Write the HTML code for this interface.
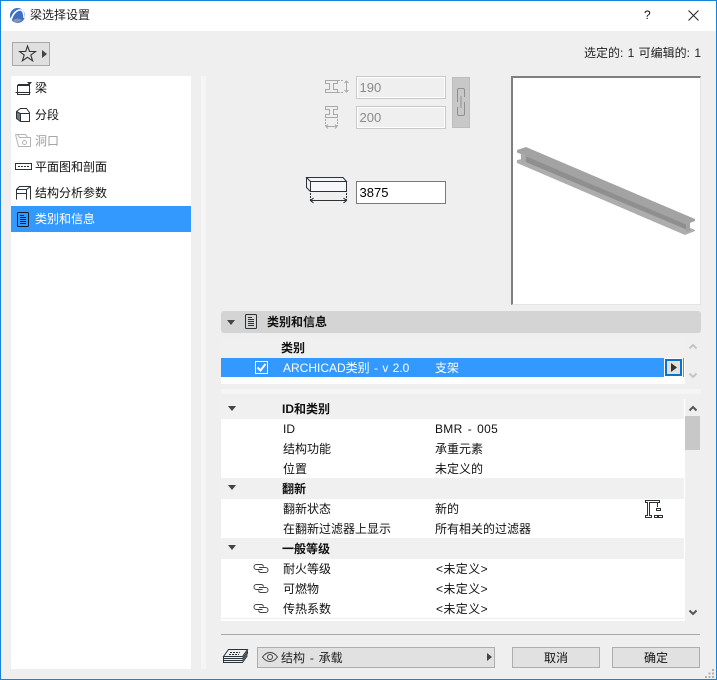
<!DOCTYPE html>
<html lang="zh"><head><meta charset="utf-8"><title>梁选择设置</title>
<style>
html,body{margin:0;padding:0;width:717px;height:680px;overflow:hidden;background:#efefef}
body{position:relative;font:12px/20px "Liberation Sans","Noto Sans CJK SC",sans-serif;color:#111}
.a{position:absolute}
.t{position:absolute;white-space:nowrap}
.b{font-weight:bold}
svg{position:absolute;overflow:visible}
.inp{position:absolute;box-sizing:border-box;left:356px;width:90px;height:23px;line-height:21px;padding-left:2.5px;font-size:13px}
.btn{position:absolute;box-sizing:border-box;top:647px;height:21px;width:88px;background:#e1e1e1;border:1px solid #adadad;text-align:center;line-height:21px}
.r{position:absolute;left:221px;width:463px;height:19px;background:#fff}
.g{position:absolute;left:221px;width:463px;height:21px;background:#f0f0f0}
</style></head><body>
<div class="a" style="left:0;top:0;width:717px;height:31px;background:#fff"></div>
<svg style="left:9px;top:7px" width="17" height="17" viewBox="0 0 17 17"><circle cx="8.5" cy="8.5" r="7.5" fill="#3d6fc4"/><path d="M2 13C4 6 8 3 11 3c3 0 4 4 4 8" fill="none" stroke="#fff" stroke-width="1.6"/><path d="M3 14c3-3 7-3 10-1-3 3-7 3-10 1z" fill="#8a93a8"/></svg>
<div class="t" style="left:30px;top:5px;font-size:12px;color:#222">梁选择设置</div>
<div class="t" style="left:644px;top:5px;font-size:12px;color:#111">?</div>
<svg style="left:688px;top:10px" width="11" height="11"><path d="M.5.5l10 10M10.500.5l-10 10" stroke="#222" fill="none"/></svg>

<div class="a" style="left:12px;top:42px;width:38px;height:24px;box-sizing:border-box;background:#dfdfdf;border:1px solid #a9a9a9"></div>
<svg style="left:19px;top:45px" width="18" height="17" viewBox="0 0 18 17"><path d="M8.5 1l2 5.500h6l-4.700 3.600 1.800 5.700-5.100-3.500-5.100 3.500 1.800-5.700L.7 6.500h6z" fill="none" stroke="#333" stroke-width="1.100"/></svg>
<svg style="left:42px;top:50px" width="5" height="8"><path d="M0 0l5 4-5 4z" fill="#444"/></svg>
<div class="t" style="right:16px;top:43px;color:#222;word-spacing:1px">选定的: 1 可编辑的: 1</div>

<div class="a" style="left:11px;top:76px;width:180px;height:593px;background:#fff"></div>
<div class="a" style="left:201px;top:76px;width:5px;height:593px;background:#f5f5f5"></div>
<div class="a" style="left:11px;top:206px;width:180px;height:26px;background:#3399ff"></div>

<svg style="left:15px;top:82px" width="18" height="14" fill="none" stroke="#2c3338"><path d="M2.5 3.500h12v9h-12zM.5 10.500h15M2.500 3.500l1-1h11M14.500 2.500v2"/><path d="M12 0h5l-2.500 3z" fill="#2c3338" stroke="none"/></svg>
<div class="t" style="left:35px;top:78px">梁</div>
<svg style="left:16px;top:108px" width="15" height="14" fill="none" stroke="#2c3338"><path d="M1 4l3.500 2v7L1 10.500z" fill="#777" stroke="none"/><path d="M.5 3.500L4.500.5h6l3 4v9h-9l-4-3zM4.500 13.500v-8l-4-2M4.500 5.500h9"/></svg>
<div class="t" style="left:35px;top:105px">分段</div>
<svg style="left:15px;top:134px" width="17" height="14" fill="none" stroke="#b5b5b5"><path d="M.5.500h10l2 3h-8l-2-3zM.5.500l3 12h12V3.500H4.500"/><circle cx="9.500" cy="8.500" r="2"/></svg>
<div class="t" style="left:35px;top:131px;color:#9c9c9c">洞口</div>
<svg style="left:15px;top:163px" width="17" height="8" fill="none" stroke="#2c3338"><path d="M.5.500h16v6H.5z"/><path d="M3 3.500h11" stroke-dasharray="2 1"/></svg>
<div class="t" style="left:35px;top:157px">平面图和剖面</div>
<svg style="left:16px;top:186px" width="15" height="14" fill="none" stroke="#2c3338"><path d="M.5 13.500v-10l3-3h11v13M.5 3.500h10v10M.5 7.500h10M10.500 3.500l4-3"/></svg>
<div class="t" style="left:35px;top:183px">结构分析参数</div>
<svg style="left:17px;top:212px" width="12" height="15" fill="none" stroke="#14202c"><rect x=".5" y=".5" width="11" height="14" rx="1"/><path d="M3 3.500h4M3 5.500h6M3 7.500h6M3 9.500h6M3 11.500h6"/></svg>
<div class="t" style="left:35px;top:209px;color:#fff">类别和信息</div>

<svg style="left:325px;top:80px" width="25" height="14" fill="none" stroke="#a8a8a8"><path d="M.5.500h12v3h-4v6h4v3H.5v-3h4v-6h-4z"/><path d="M13 .5h5M13 12.500h5" stroke-dasharray="2 1"/><path d="M21.500 1v11M19.500 3l2-2 2 2M19.500 10l2 2 2-2"/></svg>
<svg style="left:325px;top:106px" width="14" height="23" fill="none" stroke="#a8a8a8"><path d="M.5.500h12v3h-4v5h4v3H.5v-3h4v-5h-4z"/><path d="M.5 13v7M12.500 13v7" stroke-dasharray="2 1"/><path d="M1 20.500h11M3 18.500l-2 2 2 2M10 18.500l2 2-2 2"/></svg>
<div class="inp" style="top:76px;background:#efefef;border:1px solid #c9c9c9;box-shadow:inset 0 0 0 1px #fff;color:#8a8a8a">190</div>
<div class="inp" style="top:106px;background:#efefef;border:1px solid #c9c9c9;box-shadow:inset 0 0 0 1px #fff;color:#8a8a8a">200</div>
<div class="a" style="left:452px;top:77px;width:18px;height:51px;box-sizing:border-box;background:#c8c8c8;border:1px solid #bdbdbd"></div>
<svg style="left:457px;top:88px" width="8" height="28" fill="none" stroke="#8f8f8f"><path d="M.5 14V2Q.5.5 2 .5h4Q7.500.5 7.500 2v7M7.500 14v12Q7.500 27.500 6 27.500H2Q.5 27.500.5 26v-7M4 8v12"/></svg>
<svg style="left:306px;top:177px" width="42" height="27" fill="none" stroke="#2c3338"><path d="M.5.500H37l3.500 4H4.500z" fill="#f3f3f3"/><path d="M4.500 4.500h36v10h-36z" fill="#f7f7f9"/><path d="M.5.500v10l4 4"/><path d="M4.500 16v7M40.500 16v7" stroke-dasharray="2 1"/><path d="M5 23.500h35M7.500 21l-3 2.500 3 2.500M37.500 21l3 2.500-3 2.500" stroke-width="1.100"/></svg>
<div class="inp" style="top:181px;background:#fff;border:1px solid #7a7a7a;color:#000">3875</div>

<div class="a" style="left:511px;top:76px;width:190px;height:229px;box-sizing:border-box;background:#fff;border:1px solid #e3e3e3;border-top:2px solid #7f7f7f;border-left:2px solid #7f7f7f"></div>
<svg style="left:0;top:0" width="717" height="680" viewBox="0 0 717 680">
<path d="M517 160L522 159 695 230V231L685 235 517 163z" fill="#adadad"/>
<path d="M521 152L690 224V231L521 160z" fill="#8f8f8f"/>
<path d="M517 150L526 147 695 219V221L686 224.500 517 152.500z" fill="#a3a3a3"/>
<path d="M521 153l5 2v7l-5-2z" fill="#a9a9a9"/>
<path d="M686 224l4-1.500v8.500l-4 1z" fill="#a3a3a3"/>
</svg>

<div class="a" style="left:221px;top:311px;width:480px;height:22px;background:#d4d4d4;border-radius:3px"></div>
<svg style="left:227px;top:320px" width="8" height="5"><path d="M0 0h8L4 5z" fill="#444"/></svg>
<svg style="left:245px;top:314px" width="12" height="15" fill="none" stroke="#2c3338"><rect x=".5" y=".5" width="11" height="14" rx="1"/><path d="M3 3.500h4M3 5.500h6M3 7.500h6M3 9.500h6M3 11.500h6"/></svg>
<div class="t b" style="left:267px;top:312px">类别和信息</div>

<div class="a" style="left:221px;top:338px;width:464px;height:20px;background:#f0f0f0"></div>
<div class="t b" style="left:281px;top:338px">类别</div>
<div class="a" style="left:221px;top:358px;width:443px;height:19px;background:#3399ff"></div>
<div class="a" style="left:221px;top:377px;width:464px;height:7px;background:#fff"></div>
<div class="a" style="left:664px;top:358px;width:21px;height:19px;background:#fff"></div>
<div class="a" style="left:683px;top:358px;width:1px;height:19px;background:#3399ff"></div>
<div class="a" style="left:665px;top:359px;width:17px;height:17px;box-sizing:border-box;border:2px solid #0c72c8;background:#e1e1e1"></div>
<svg style="left:671px;top:363px" width="6" height="9"><path d="M0 0l6 4.500L0 9z" fill="#333"/></svg>
<svg style="left:255px;top:361px" width="13" height="13"><rect x=".5" y=".5" width="12" height="12" fill="#3399ff" stroke="#fff"/><path d="M2.500 6.500l3 3L10.500 3" fill="none" stroke="#fff" stroke-width="2"/></svg>
<div class="t" style="left:283px;top:358px;color:#fff;word-spacing:1px">ARCHICAD类别 - v 2.0</div>
<div class="t" style="left:435px;top:358px;color:#fff">支架</div>
<svg style="left:689px;top:344px" width="8" height="5" fill="none" stroke="#c4c4c4" stroke-width="2"><path d="M.5 4.500l3.500-3.500 3.500 3.500"/></svg>
<svg style="left:689px;top:373px" width="8" height="5" fill="none" stroke="#c4c4c4" stroke-width="2"><path d="M.5.500L4 4 7.500.5"/></svg>

<div class="a" style="left:221px;top:389px;width:480px;height:5px;background:#f5f5f5"></div>

<div class="a" style="left:221px;top:399px;width:464px;height:222px;background:#fff"></div>
<div class="g" style="top:399px;height:20px"></div>
<div class="r" style="top:419px"></div>
<div class="r" style="top:439px"></div>
<div class="r" style="top:459px"></div>
<div class="g" style="top:478px"></div>
<div class="r" style="top:499px"></div>
<div class="r" style="top:519px"></div>
<div class="g" style="top:538px"></div>
<div class="r" style="top:559px"></div>
<div class="r" style="top:579px"></div>
<div class="r" style="top:599px"></div>
<div class="a" style="left:221px;top:618px;width:463px;height:1px;background:#efefef"></div>

<svg style="left:228px;top:406px" width="8" height="5"><path d="M0 0h8L4 5z" fill="#444"/></svg>
<svg style="left:228px;top:485px" width="8" height="5"><path d="M0 0h8L4 5z" fill="#444"/></svg>
<svg style="left:228px;top:545px" width="8" height="5"><path d="M0 0h8L4 5z" fill="#444"/></svg>

<div class="t b" style="left:282px;top:399px">ID和类别</div>
<div class="t" style="left:283px;top:419px">ID</div><div class="t" style="left:435px;top:419px;letter-spacing:.3px;word-spacing:1.500px">BMR - 005</div>
<div class="t" style="left:283px;top:439px">结构功能</div><div class="t" style="left:435px;top:439px">承重元素</div>
<div class="t" style="left:283px;top:459px">位置</div><div class="t" style="left:435px;top:459px">未定义的</div>
<div class="t b" style="left:282px;top:479px">翻新</div>
<div class="t" style="left:283px;top:499px">翻新状态</div><div class="t" style="left:435px;top:499px">新的</div>
<div class="t" style="left:283px;top:519px">在翻新过滤器上显示</div><div class="t" style="left:435px;top:519px">所有相关的过滤器</div>
<div class="t b" style="left:282px;top:539px">一般等级</div>
<div class="t" style="left:283px;top:559px">耐火等级</div><div class="t" style="left:436px;top:559px;letter-spacing:.4px">&lt;未定义&gt;</div>
<div class="t" style="left:283px;top:579px">可燃物</div><div class="t" style="left:436px;top:579px;letter-spacing:.4px">&lt;未定义&gt;</div>
<div class="t" style="left:283px;top:599px">传热系数</div><div class="t" style="left:436px;top:599px;letter-spacing:.4px">&lt;未定义&gt;</div>

<svg style="left:254px;top:564px" width="15" height="9" fill="none" stroke="#444"><path d="M8.500 5.500h-6a2.500 2.500 0 0 1 0-5h5a2.500 2.500 0 0 1 2 2"/><path d="M5 3.500h6.500a2.500 2.500 0 0 1 0 5h-5a2.500 2.500 0 0 1-2-2"/></svg>
<svg style="left:254px;top:584px" width="15" height="9" fill="none" stroke="#444"><path d="M8.500 5.500h-6a2.500 2.500 0 0 1 0-5h5a2.500 2.500 0 0 1 2 2"/><path d="M5 3.500h6.500a2.500 2.500 0 0 1 0 5h-5a2.500 2.500 0 0 1-2-2"/></svg>
<svg style="left:254px;top:604px" width="15" height="9" fill="none" stroke="#444"><path d="M8.500 5.500h-6a2.500 2.500 0 0 1 0-5h5a2.500 2.500 0 0 1 2 2"/><path d="M5 3.500h6.500a2.500 2.500 0 0 1 0 5h-5a2.500 2.500 0 0 1-2-2"/></svg>

<svg style="left:645px;top:500px" width="18" height="18" fill="none" stroke="#2c3338"><path d="M.5.500h14v2H4.500v13h2v2H.5v-2h2v-13h-2z"/><path d="M12.500 3v4M11.500 8.500h4v2h-4zM9.500 15.500h3v2h-3zM13.500 15.500h4v2h-4z"/></svg>

<div class="a" style="left:685px;top:416px;width:15px;height:34px;background:#c8c8c8"></div>
<svg style="left:689px;top:406px" width="8" height="5" fill="none" stroke="#555" stroke-width="2"><path d="M.5 4.500l3.500-3.500 3.500 3.500"/></svg>
<svg style="left:689px;top:610px" width="8" height="5" fill="none" stroke="#555" stroke-width="2"><path d="M.5.500L4 4 7.500.5"/></svg>

<div class="a" style="left:221px;top:634px;width:479px;height:1px;background:#a8a8a8"></div>
<svg style="left:223px;top:649px" width="25" height="15" fill="none" stroke="#2c3338"><path d="M5.500.500h19l-5 7H.5zM.5 7.500v2h19l5-7v2M.5 9.500v2h19l5-7M.5 11.500v2h19l5-7"/><path d="M7 3.500h10M6 5.500h10" stroke-dasharray="2 1"/></svg>
<div class="a" style="left:257px;top:647px;width:238px;height:21px;box-sizing:border-box;background:#e1e1e1;border:1px solid #adadad"></div>
<svg style="left:262px;top:652px" width="16" height="10" fill="none" stroke="#444"><path d="M.5 5C3 1.500 5.500.5 8 .5S13 1.500 15.500 5C13 8.500 10.500 9.500 8 9.500S3 8.500.5 5z"/><circle cx="8" cy="5" r="2.500"/></svg>
<div class="t" style="left:281px;top:648px;color:#222;word-spacing:1.500px">结构 - 承载</div>
<svg style="left:487px;top:653px" width="5" height="8"><path d="M0 0l5 4-5 4z" fill="#444"/></svg>
<div class="btn" style="left:512px">取消</div>
<div class="btn" style="left:612px">确定</div>
<svg style="left:705px;top:669px" width="10" height="10" fill="#b0b0b0"><rect x="7" y="0" width="2" height="2"/><rect x="3.500" y="3.500" width="2" height="2"/><rect x="7" y="3.500" width="2" height="2"/><rect x="0" y="7" width="2" height="2"/><rect x="3.500" y="7" width="2" height="2"/><rect x="7" y="7" width="2" height="2"/></svg>

<div class="a" style="left:0;top:0;width:717px;height:680px;box-sizing:border-box;border:1px solid #1683d8"></div>
</body></html>
